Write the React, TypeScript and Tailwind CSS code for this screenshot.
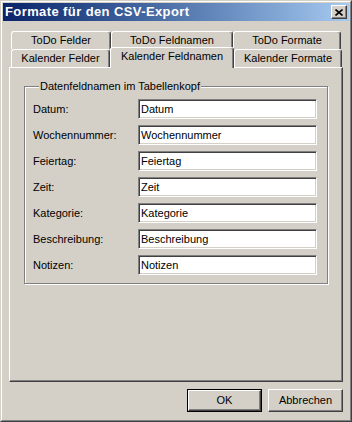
const font = "font-['Liberation_Sans',Arial,sans-serif]";

const rows = [
  ['Datum:', 'Datum'],
  ['Wochennummer:', 'Wochennummer'],
  ['Feiertag:', 'Feiertag'],
  ['Zeit:', 'Zeit'],
  ['Kategorie:', 'Kategorie'],
  ['Beschreibung:', 'Beschreibung'],
  ['Notizen:', 'Notizen'],
];

function Tab({ label, w, selected }: { label: string; w: string; selected?: boolean }) {
  return (
    <div
      className={`${w} flex items-center justify-center rounded-t-[3px] border-l border-t border-r border-l-white border-t-white border-r-[#404040] bg-[#d4d0c8] shadow-[inset_-1px_0_#808080] ${
        selected ? 'relative z-10 h-[21px] -mb-[1px] pb-[3px]' : 'h-full'
      }`}
    >
      {label}
    </div>
  );
}

export default function App() {
  return (
    <div className={`${font} text-[11px] text-black`}>
      <div className="flex h-[422px] w-[352px] flex-col border border-t-[#d4d0c8] border-l-[#d4d0c8] border-r-[#404040] border-b-[#404040] bg-[#d4d0c8]">
        <div className="flex flex-1 flex-col border border-t-white border-l-white border-r-[#808080] border-b-[#808080] p-px">
          {/* Title bar */}
          <div className="flex h-[18px] items-center justify-between bg-gradient-to-r from-[#0a246a] to-[#a6caf0] pl-[2px] pr-[2px]">
            <span className="text-[13px] font-bold tracking-[0.4px] text-white">Formate für den CSV-Export</span>
            <div className="flex h-[14px] w-[16px] items-center justify-center border border-t-white border-l-white border-r-[#404040] border-b-[#404040] bg-[#d4d0c8] shadow-[inset_-1px_-1px_#808080]">
              <svg width="8" height="7" viewBox="0 0 8 7">
                <path d="M0.5 0.5 L7.5 6.5 M7.5 0.5 L0.5 6.5" stroke="#000" strokeWidth="1.6" />
              </svg>
            </div>
          </div>

          {/* Tabs + panel */}
          <div className="px-[6px] pt-[10px]">
            <div className="flex h-[18px] pl-[2px]">
              <Tab label="ToDo Felder" w="w-[100px]" />
              <Tab label="ToDo Feldnamen" w="w-[122px]" />
              <Tab label="ToDo Formate" w="w-[108px]" />
            </div>
            <div className="flex h-[18px] items-end pl-[2px]">
              <Tab label="Kalender Felder" w="w-[99px]" />
              <Tab label="Kalender Feldnamen" w="w-[124px]" selected />
              <Tab label="Kalender Formate" w="w-[108px]" />
            </div>
            <div className="h-[315px] border border-t-white border-l-white border-r-[#404040] border-b-[#404040] shadow-[inset_-1px_-1px_#808080] px-[14px] pt-[12px]">
              <fieldset className="border border-[#808080] shadow-[1px_1px_0_#fff,inset_1px_1px_0_#fff] px-[8px] pb-[8px] pt-[6px]">
                <legend className="ml-[6px] bg-[#d4d0c8] px-[1px] leading-[13px]">Datenfeldnamen im Tabellenkopf</legend>
                <div className="flex flex-col gap-[6px]">
                  {rows.map(([label, value]) => (
                    <div key={label} className="flex items-center">
                      <span className="w-[105px]">{label}</span>
                      <div className="flex h-[20px] w-[179px] items-center border border-t-[#808080] border-l-[#808080] border-r-white border-b-white bg-white pl-[2px] shadow-[inset_1px_1px_#404040,inset_-1px_-1px_#d4d0c8]">
                        {value}
                      </div>
                    </div>
                  ))}
                </div>
              </fieldset>
            </div>
          </div>

          {/* Buttons */}
          <div className="flex justify-end gap-[6px] px-[6px] pt-[7px]">
            <div className="h-[23px] w-[75px] border border-black">
              <div className="flex h-full items-center justify-center border border-t-white border-l-white border-r-[#404040] border-b-[#404040] shadow-[inset_-1px_-1px_#808080]">
                OK
              </div>
            </div>
            <div className="flex h-[23px] w-[75px] items-center justify-center border border-t-white border-l-white border-r-[#404040] border-b-[#404040] shadow-[inset_-1px_-1px_#808080]">
              Abbrechen
            </div>
          </div>
        </div>
      </div>
    </div>
  );
}
